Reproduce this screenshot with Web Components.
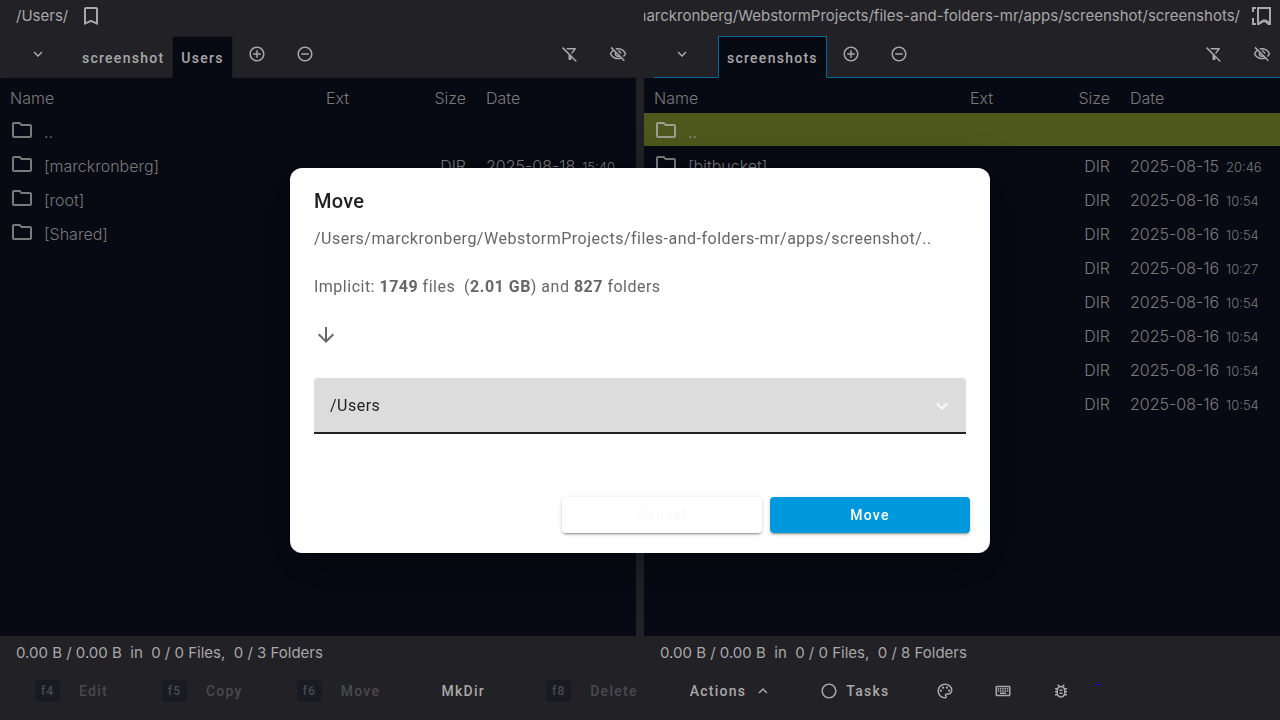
<!DOCTYPE html>
<html lang="en">
<head>
<meta charset="utf-8">
<meta name="viewport" content="width=device-width, initial-scale=1">
<title>Files and Folders</title>
<style>
html, body { height: 100%; margin: 0; }
body {
  --bar: #222126; --pane: #070913; --bright: #a8a8a8; --dim: #7a7a7a; --accent: #016a9b;
  background: var(--bar); color: var(--bright);
  font: 300 16px/24px Inter, "Liberation Sans", sans-serif;
}
</style>
</head>
<body>
<ff-app></ff-app>
<script>
const ICONS = {
  bookmark: 'M17 3H7c-1.1 0-2 .9-2 2v16l7-3 7 3V5c0-1.1-.9-2-2-2zm0 15-5-2.180L7 18V5h10v13z',
  bookmarks: 'M4 3h4v2H6v3H4zM4 14h2v5h2v2H4zM9 3h14v18h-3l-2-2-2-1-5 3H9zM11 5v13l4-2.500h3l3 2V5z',
  down: 'M7.410 8.590 12 13.170l4.590-4.580L18 10l-6 6-6-6z',
  up: 'M7.410 15.410 12 10.830l4.590 4.580L18 14l-6-6-6 6z',
  plus: 'M13 7h-2v4H7v2h4v4h2v-4h4v-2h-4V7zm-1-5C6.480 2 2 6.480 2 12s4.480 10 10 10 10-4.480 10-10S17.520 2 12 2zm0 18c-4.410 0-8-3.590-8-8s3.590-8 8-8 8 3.590 8 8-3.590 8-8 8z',
  minus: 'M7 11v2h10v-2H7zm5-9C6.480 2 2 6.480 2 12s4.480 10 10 10 10-4.480 10-10S17.520 2 12 2zm0 18c-4.410 0-8-3.590-8-8s3.590-8 8-8 8 3.590 8 8-3.590 8-8 8z',
  circle: 'M12 2C6.470 2 2 6.470 2 12s4.470 10 10 10 10-4.470 10-10S17.530 2 12 2zm0 18c-4.410 0-8-3.590-8-8s3.590-8 8-8 8 3.590 8 8-3.590 8-8 8z',
  filter: 'M16.950 6l-3.570 4.550 1.430 1.430c1.030-1.310 4.980-6.370 4.980-6.370C20.300 4.950 19.830 4 19 4H6.830l2 2h8.120zM2.810 2.810 1.390 4.220 10 13v6c0 .550.450 1 1 1h2c.550 0 1-.450 1-1v-2.170l5.780 5.780 1.410-1.410L2.810 2.810z',
  eye: 'M12 6c3.790 0 7.170 2.130 8.820 5.500-.590 1.220-1.420 2.270-2.410 3.120l1.410 1.410c1.390-1.230 2.490-2.770 3.180-4.530C21.270 7.110 17 4 12 4c-1.270 0-2.490.200-3.640.570l1.650 1.650C10.660 6.090 11.320 6 12 6zm-1.070 1.140L13 9.210c.570.250 1.030.710 1.280 1.280l2.070 2.070c.080-.340.140-.700.140-1.070C16.500 9.010 14.480 7 12 7c-.370 0-.720.050-1.070.140zM2.010 3.870l2.680 2.680C3.060 7.830 1.770 9.530 1 11.500 2.730 15.890 7 19 12 19c1.520 0 2.980-.290 4.320-.820l3.420 3.420 1.410-1.410L3.420 2.450 2.010 3.870zm7.500 7.500 2.610 2.610c-.040.010-.080.020-.120.020-1.380 0-2.500-1.120-2.500-2.500 0-.050.010-.080.010-.130zm-3.400-3.400 1.750 1.750c-.230.550-.360 1.150-.360 1.780 0 2.480 2.020 4.500 4.500 4.500.630 0 1.230-.130 1.770-.360l.980.980c-.880.240-1.800.380-2.750.380-3.790 0-7.170-2.130-8.820-5.500.700-1.430 1.720-2.610 2.930-3.530z',
  folder: 'M9.170 6l2 2H20v10H4V6h5.170M10 4H4c-1.100 0-1.990.900-1.990 2L2 18c0 1.100.900 2 2 2h16c1.100 0 2-.900 2-2V8c0-1.100-.900-2-2-2h-8l-2-2z',
  arrow: 'M20 12l-1.410-1.410L13 16.170V4h-2v12.170l-5.580-5.590L4 12l8 8 8-8z',
  palette: 'M12 22C6.490 22 2 17.510 2 12S6.490 2 12 2s10 4.040 10 9c0 3.310-2.690 6-6 6h-1.770c-.280 0-.500.220-.500.500 0 .120.050.230.130.330.410.470.640 1.060.640 1.670 0 1.380-1.120 2.500-2.500 2.500zm0-18c-4.410 0-8 3.590-8 8s3.590 8 8 8c.280 0 .500-.220.500-.500 0-.160-.080-.280-.140-.350-.410-.460-.630-1.050-.630-1.650 0-1.380 1.120-2.500 2.500-2.500H16c2.210 0 4-1.790 4-4 0-3.860-3.590-7-8-7zM5 11.500a1.500 1.500 0 1 0 3 0 1.500 1.500 0 1 0-3 0M8 7.500a1.500 1.500 0 1 0 3 0 1.500 1.500 0 1 0-3 0M13 7.500a1.500 1.500 0 1 0 3 0 1.500 1.500 0 1 0-3 0M16 11.500a1.500 1.500 0 1 0 3 0 1.500 1.500 0 1 0-3 0',
  keyboard: 'M20 7v10H4V7h16m0-2H4c-1.100 0-1.990.900-1.990 2L2 17c0 1.100.900 2 2 2h16c1.100 0 2-.900 2-2V7c0-1.100-.900-2-2-2zm-9 3h2v2h-2zm0 3h2v2h-2zM8 8h2v2H8zm0 3h2v2H8zm-3 0h2v2H5zm0-3h2v2H5zm3 6h8v2H8zm6-3h2v2h-2zm0-3h2v2h-2zm3 3h2v2h-2zm0-3h2v2h-2z',
  bug: 'M20 8h-2.810c-.450-.780-1.070-1.450-1.820-1.960L17 4.410 15.590 3l-2.170 2.170C12.960 5.060 12.490 5 12 5s-.960.060-1.410.170L8.410 3 7 4.410l1.620 1.630C7.880 6.550 7.260 7.220 6.810 8H4v2h2.090c-.050.330-.090.660-.090 1v1H4v2h2v1c0 .340.040.670.090 1H4v2h2.810c1.040 1.790 2.970 3 5.190 3s4.150-1.210 5.190-3H20v-2h-2.090c.050-.330.090-.660.090-1v-1h2v-2h-2v-1c0-.340-.040-.670-.090-1H20V8zm-4 4v3c0 2.200-1.800 4-4 4s-4-1.800-4-4v-4c0-2.200 1.800-4 4-4s4 1.800 4 4v1zm-6 2h4v2h-4zm0-4h4v2h-4z'
};

class Base extends HTMLElement {
  constructor() { super(); this.attachShadow({ mode: 'open' }); }
  attr(name) { return this.getAttribute(name) || ''; }
  connectedCallback() {
    this.shadowRoot.innerHTML = `<style>*{box-sizing:border-box}button{font:500 14px/20px Roboto,sans-serif;letter-spacing:.09em;color:inherit;background:none;border:0;padding:0;margin:0}${this.css()}</style>${this.html()}`;
  }
}

class FfIcon extends Base {
  css() { return ':host{display:block;flex:none;width:18px;height:18px}svg{display:block;width:100%;height:100%;fill:currentColor}'; }
  html() { return `<svg viewBox="0 0 24 24" aria-hidden="true"><path fill-rule="evenodd" d="${ICONS[this.attr('name')]}"/></svg>`; }
}

class FfIconButton extends Base {
  css() { return ':host{display:block;flex:none}button{display:grid;place-items:center;width:36px;height:36px}'; }
  html() { return `<button aria-label="${this.attr('label')}"><ff-icon name="${this.attr('name')}"></ff-icon></button>`; }
}

class FfPath extends Base {
  css() {
    return `:host{display:flex;align-items:center;gap:11px;height:32px;padding-left:16px;font-size:15px;font-weight:400}
      div{min-width:0;overflow:hidden;display:flex;justify-content:flex-end;white-space:nowrap}
      ff-icon{width:24px;height:24px}
      :host([long]){padding:0 8px 0 0;gap:8px}:host([long]) div{flex:1}`;
  }
  html() { return `<div><span><slot></slot></span></div><ff-icon name="${this.hasAttribute('long') ? 'bookmarks' : 'bookmark'}"></ff-icon>`; }
}

class FfTabs extends Base {
  css() {
    return `:host{display:flex;height:46px;padding-top:4px;--line:#1d1c21}
      :host([focused]){--line:var(--accent)}
      .lead,.rest{display:flex;align-items:flex-start;border-bottom:1px solid var(--line)}
      .lead{width:64px;margin-left:10px;padding-left:10px}
      .rest{flex:1;padding-left:6px;gap:12px}
      .space{flex:1}
      .tab{padding:2px 8px 0;border-bottom:1px solid var(--line)}
      .tab[aria-selected=true]{background:var(--pane);border:1px solid var(--line);border-bottom-color:var(--pane);padding:2px 8px 0}`;
  }
  html() {
    const tabs = this.attr('tabs').split(',');
    return `<div class="lead"><ff-icon-button name="down" label="Tab menu"></ff-icon-button></div>
      ${tabs.map((t, i) => `<button class="tab" role="tab" aria-selected="${i === tabs.length - 1}">${t}</button>`).join('')}
      <div class="rest"><ff-icon-button name="plus" label="Add tab"></ff-icon-button><ff-icon-button name="minus" label="Close tab"></ff-icon-button>
      <span class="space"></span><ff-icon-button name="filter" label="Clear filter"></ff-icon-button><ff-icon-button name="eye" label="Hidden files"></ff-icon-button></div>`;
  }
}

class FfTable extends Base {
  css() {
    return `:host{display:block;background:var(--pane);color:var(--dim);overflow:hidden;padding-top:7px}
      table{width:100%;border-collapse:collapse;table-layout:fixed}
      th,td{padding:0;font-weight:inherit;text-align:left;white-space:nowrap;vertical-align:top}
      th{height:28px;padding-top:1px}td{height:34px;padding-top:7px}
      th:nth-child(2){width:60px}th:nth-child(3){width:80px}th:nth-child(4){width:170px}
      th:nth-child(1),td:nth-child(1){padding-left:10px}
      th:nth-child(3),td:nth-child(3){text-align:right}
      th:nth-child(4),td:nth-child(4){padding-left:20px}
      .name{display:flex;gap:10px}ff-icon{width:24px;height:24px;margin-top:-2px}
      .current{background:linear-gradient(#4e571c,#4e571c) 0 0/100% 33px no-repeat;color:#9b9d92}
      time span{font-size:13px;margin-left:7px}`;
  }
  html() {
    const rows = JSON.parse(this.querySelector('script').textContent);
    return `<table><thead><tr><th>Name</th><th>Ext</th><th>Size</th><th>Date</th></tr></thead><tbody>
      ${rows.map(([name, day, clock], i) => `<tr${!i && this.hasAttribute('focused') ? ' class="current"' : ''}><td><div class="name"><ff-icon name="folder"></ff-icon><span>${name}</span></div></td><td></td><td>${day ? 'DIR' : ''}</td><td>${day ? `<time>${day}<span>${clock}</span></time>` : ''}</td></tr>`).join('')}
      </tbody></table>`;
  }
}

class FfPane extends Base {
  css() {
    return `:host{display:grid;grid-template:auto auto minmax(0,1fr) auto/minmax(0,1fr);min-width:0;min-height:0}
      .status{padding:5px 16px;font-size:15px;font-weight:400;white-space:pre}`;
  }
  html() { return `<slot name="path"></slot><slot name="tabs"></slot><slot name="files"></slot><div class="status">${this.attr('status')}</div>`; }
}

class FfCommand extends Base {
  css() {
    return `:host{display:block;flex:none}
      button{display:flex;align-items:center;justify-content:center;gap:8px;height:36px;padding:0 16px;white-space:nowrap}
      :host([wide]) button{min-width:90px}:host([menu]) button{padding:0 10px 0 14px}
      kbd{font:500 12px/22px Roboto,sans-serif;letter-spacing:.09em;background:#1a1b22;border-radius:4px;width:25px;text-align:center;margin-right:11px}
      button:disabled{color:#4a4a4e}`;
  }
  html() {
    const key = this.attr('key');
    return `<button${key ? ' disabled' : ''}>${key ? `<kbd>${key}</kbd>` : ''}${this.hasAttribute('icon') ? `<ff-icon name="${this.attr('icon')}"></ff-icon>` : ''}<slot></slot>${this.hasAttribute('menu') ? '<ff-icon name="up"></ff-icon>' : ''}</button>`;
  }
}

class FfToolbar extends Base {
  css() {
    return `:host{display:flex;align-items:center;gap:22px;padding:3px 19px 11px;overflow:hidden}
      a{display:block;flex:none;align-self:flex-start;width:5px;height:12px;margin-left:-5px;border-bottom:1px solid #0000ee}`;
  }
  html() {
    return `<ff-command key="f4">Edit</ff-command><ff-command key="f5">Copy</ff-command><ff-command key="f6">Move</ff-command>
      <ff-command wide>MkDir</ff-command><ff-command key="f8">Delete</ff-command><ff-command menu>Actions</ff-command>
      <ff-command icon="circle">Tasks</ff-command>
      <ff-icon-button name="palette" label="Theme"></ff-icon-button><ff-icon-button name="keyboard" label="Shortcuts"></ff-icon-button>
      <ff-icon-button name="bug" label="Report a bug"></ff-icon-button><a href="#" aria-label="Download"></a>`;
  }
}

class FfMoveDialog extends Base {
  css() {
    return `dialog{position:fixed;inset:0;margin:auto;width:700px;max-width:90%;height:fit-content;border:0;border-radius:12px;padding:17px 0 20px;background:#fff;color:#666;
        font:400 16px/24px Roboto,sans-serif;letter-spacing:.031em;
        box-shadow:0 11px 15px -7px rgba(0,0,0,.2),0 24px 38px 3px rgba(0,0,0,.14),0 9px 46px 8px rgba(0,0,0,.12)}
      h2{margin:0 24px;font:500 20px/32px Roboto,sans-serif;letter-spacing:.012em;color:#212121}
      p{margin:10px 24px 24px;white-space:pre-wrap;overflow-wrap:anywhere}p+p{margin-top:0}
      .arrow{width:24px;height:24px;margin:0 24px 31px}
      .field{position:relative;margin:0 24px 63px}
      select{appearance:none;display:block;width:100%;height:56px;border:0;border-bottom:2px solid #232227;border-radius:4px 4px 0 0;background:#dcdcdc;padding:2px 16px 0;font:inherit;letter-spacing:inherit;color:#212121}
      .field ff-icon{position:absolute;right:12px;top:16px;width:24px;height:24px;color:#fafafa;pointer-events:none}
      .actions{display:flex;justify-content:flex-end;gap:8px;padding:0 20px}
      .actions button{width:200px;height:36px;border-radius:4px;background:#fff;color:#fafafa;box-shadow:0 3px 1px -2px rgba(0,0,0,.2),0 2px 2px rgba(0,0,0,.14),0 1px 5px rgba(0,0,0,.12)}
      .actions .go{background:#0098dd;color:#fff}`;
  }
  html() {
    return `<dialog open aria-labelledby="title"><h2 id="title">Move</h2>
      <p>/Users/marckronberg/WebstormProjects/files-and-folders-mr/apps/screenshot/..</p>
      <p>Implicit: <b>1749</b> files  (<b>2.01 GB</b>) and <b>827</b> folders</p>
      <ff-icon class="arrow" name="arrow"></ff-icon>
      <div class="field"><select aria-label="Target folder"><option>/Users</option></select><ff-icon name="down"></ff-icon></div>
      <div class="actions"><button>Cancel</button><button class="go">Move</button></div></dialog>`;
  }
}

class FfApp extends Base {
  css() {
    return `:host{display:grid;grid-template:minmax(0,1fr) auto/minmax(0,1fr);height:100vh;overflow:hidden}
      main{display:grid;grid-template-columns:minmax(0,1fr) minmax(0,1fr);gap:8px;min-height:0}`;
  }
  html() {
    const other = clock => ['', '2025-08-16', clock];
    const right = [['..'], ['[bitbucket]', '2025-08-15', '20:46'], other('10:54'), other('10:54'), other('10:27'),
      other('10:54'), other('10:54'), other('10:54'), other('10:54')];
    const left = [['..'], ['[marckronberg]', '2025-08-18', '15:40'], ['[root]'], ['[Shared]']];
    const data = rows => `<script type="application/json">${JSON.stringify(rows)}<\/script>`;
    return `<main>
      <ff-pane status="0.00 B / 0.00 B  in  0 / 0 Files,  0 / 3 Folders">
        <ff-path slot="path">/Users/</ff-path><ff-tabs slot="tabs" tabs="screenshot,Users"></ff-tabs>
        <ff-table slot="files">${data(left)}</ff-table></ff-pane>
      <ff-pane status="0.00 B / 0.00 B  in  0 / 0 Files,  0 / 8 Folders">
        <ff-path slot="path" long>/Users/marckronberg/WebstormProjects/files-and-folders-mr/apps/screenshot/screenshots/</ff-path>
        <ff-tabs slot="tabs" focused tabs="screenshots"></ff-tabs>
        <ff-table slot="files" focused>${data(right)}</ff-table></ff-pane>
      </main><ff-toolbar></ff-toolbar><ff-move-dialog></ff-move-dialog>`;
  }
}

Object.entries({ 'ff-icon': FfIcon, 'ff-icon-button': FfIconButton, 'ff-path': FfPath, 'ff-tabs': FfTabs, 'ff-table': FfTable,
  'ff-pane': FfPane, 'ff-command': FfCommand, 'ff-toolbar': FfToolbar, 'ff-move-dialog': FfMoveDialog, 'ff-app': FfApp })
  .forEach(([name, cls]) => customElements.define(name, cls));
</script>
</body>
</html>
